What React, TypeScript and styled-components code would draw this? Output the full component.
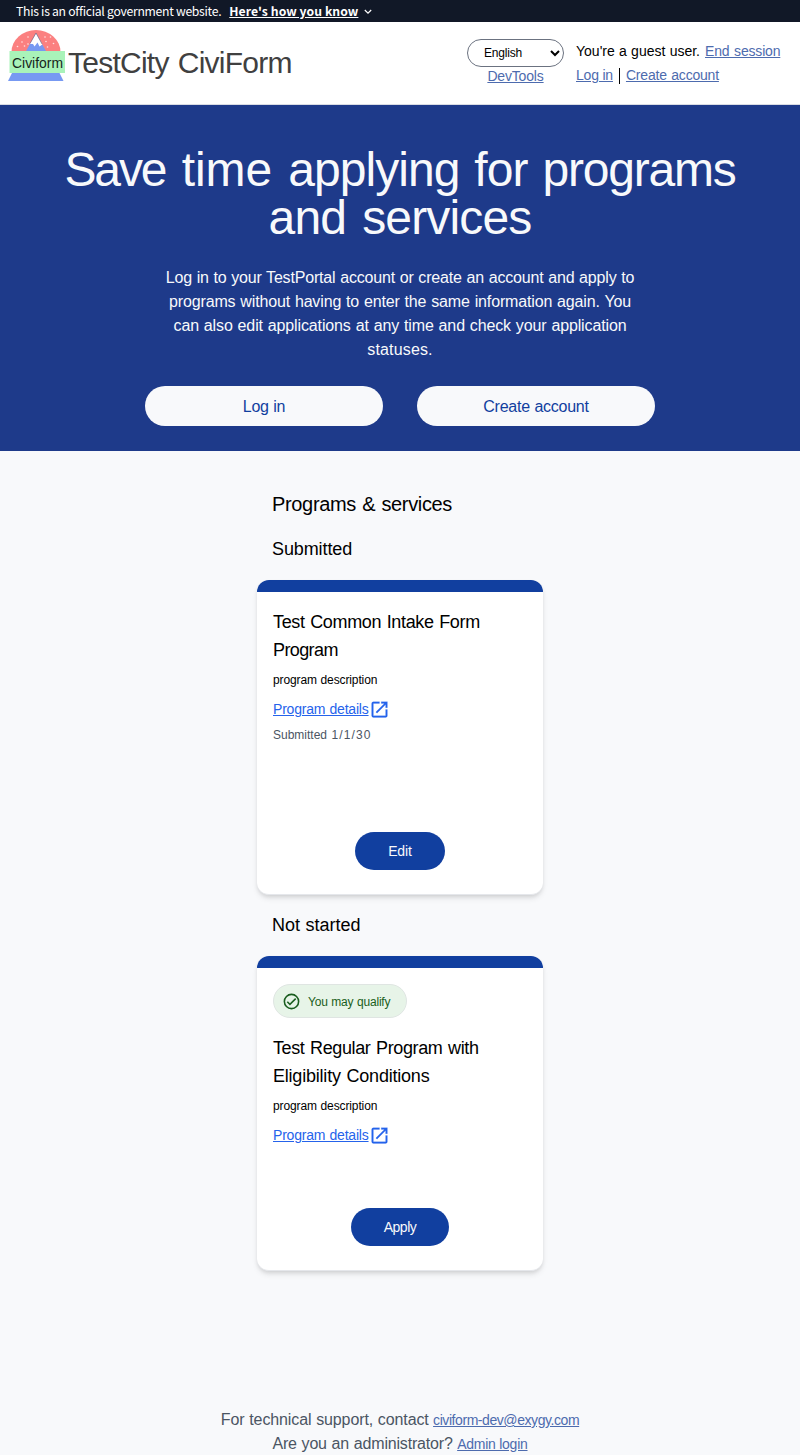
import React from "react";
import styled, { createGlobalStyle } from "styled-components";

const GlobalStyle = createGlobalStyle`
  * { box-sizing: border-box; }
  body { margin: 0; background: #f8f9fb; color: #000; font: 16px/24px "Liberation Sans", Arial, sans-serif; }
  h1, h2, h3, h4, p { margin: 0; font-weight: 400; white-space: nowrap; }
  a { color: #4d6bae; text-decoration: underline; }
`;

const Page = styled.div`
  width: 800px;
  height: 1455px;
  display: flex;
  flex-direction: column;
  overflow: hidden;
`;

const Banner = styled.div`
  height: 22px;
  padding: 1px 16px 0;
  display: flex;
  align-items: center;
  background: #111827;
  color: #fff;
  font: 12.2px/21px "Noto Sans CJK SC", sans-serif;
  white-space: nowrap;
`;

const BannerLink = styled.a`
  && { color: #fff; }
  margin: 0 6px 0 8px;
  font-weight: 700;
`;

const Header = styled.header`
  height: 83px;
  padding: 8px 20px 0 8px;
  display: flex;
  background: #fff;
  border-bottom: 1px solid #d9dce4;
`;

const Brand = styled.div`
  flex: 1;
  display: flex;
  align-items: flex-start;
`;

const BrandName = styled.h1`
  margin: 15px 0 0 3px;
  color: #404040;
  font-size: 30px;
  line-height: 36px;
`;

const LanguageColumn = styled.div`
  width: 97px;
  margin: 9px 12px 0 0;
  display: flex;
  flex-direction: column;
  align-items: center;
  font-size: 14px;
  line-height: 18px;
`;

const LanguagePicker = styled.div`
  width: 97px;
  height: 28px;
  padding: 0 3px 0 16px;
  display: flex;
  align-items: center;
  justify-content: space-between;
  border: 1px solid #6b7280;
  border-radius: 14px;
  font-size: 12px;
`;

const Account = styled.div`
  width: 204px;
  padding-top: 9px;
  font-size: 14px;
  white-space: nowrap;
`;

const AccountLine = styled.div`
  height: 24px;
  display: flex;
  align-items: center;
  gap: 5px;
`;

const Divider = styled.span`
  width: 1px;
  height: 16px;
  margin: 2px 1px 0;
  background: #000;
`;

const Hero = styled.section`
  height: 346px;
  padding-top: 41px;
  background: #1e3a8a;
  color: #f8f9fb;
  text-align: center;
`;

const HeroTitle = styled.h2`
  font-size: 48px;
  line-height: 48px;
`;

const HeroText = styled.p`
  margin-top: 24px;
`;

const HeroActions = styled.div`
  margin-top: 24px;
  display: flex;
  justify-content: center;
  gap: 34px;
`;

const HeroButton = styled.button`
  width: 238px;
  height: 40px;
  padding: 1px 0 0;
  border: 0;
  border-radius: 20px;
  background: #f8f9fb;
  color: #113f9f;
  font: inherit;
`;

const Programs = styled.main`
  width: 286px;
  margin: 39px auto 0;
`;

const SectionTitle = styled.h2`
  padding-left: 15px;
  margin-bottom: 1px;
  font-size: 20px;
  line-height: 28px;
`;

const GroupTitle = styled.h3`
  padding: 16px 0 17px 15px;
  font-size: 18px;
  line-height: 28px;
`;

const Card = styled.article`
  height: 315px;
  padding: 0 16px 24px;
  display: flex;
  flex-direction: column;
  overflow: hidden;
  background: #fff;
  border-bottom: 1px solid #e5e7eb;
  border-radius: 12px;
  box-shadow: 0 4px 6px -1px rgba(0, 0, 0, 0.1), 0 2px 4px -1px rgba(0, 0, 0, 0.1);
`;

const CardBar = styled.div`
  flex: none;
  height: 12px;
  margin: 0 -16px 16px;
  background: #113f9f;
`;

const Eligibility = styled.div`
  width: 134px;
  height: 34px;
  margin-bottom: 16px;
  padding: 1px 0 0 8px;
  display: flex;
  align-items: center;
  gap: 7px;
  border: 1px solid #dfe5e2;
  border-radius: 17px;
  background: #e7f4e8;
  color: #1b5e20;
  font-size: 12px;
  white-space: nowrap;
`;

const CardTitle = styled.h4`
  font-size: 18px;
  line-height: 28px;
`;

const Description = styled.p`
  margin-top: 8px;
  font-size: 12px;
  line-height: 16px;
`;

const Details = styled.a`
  && { color: #2563eb; }
  height: 20px;
  margin-top: 11px;
  display: flex;
  align-items: center;
  font-size: 14px;
  line-height: 20px;
`;

const SubmittedDate = styled.p`
  margin-top: 8px;
  color: #4b5563;
  font-size: 12px;
  line-height: 16px;
`;

const CardButton = styled.button<{ $width: number }>`
  width: ${(p) => p.$width}px;
  height: 38px;
  margin: auto auto 0;
  padding: 0 0 1px;
  border: 0;
  border-radius: 19px;
  background: #113f9f;
  color: #f8f9fb;
  font: 14px "Liberation Sans", Arial, sans-serif;
`;

const Footer = styled.footer`
  margin: auto 0 -1px;
  color: #4b5563;
  text-align: center;
  a { font-size: 14px; }
`;

/* Fine-tunes the set width of a run of text */
const Run = styled.span<{ $ls?: number; $ws?: number }>`
  letter-spacing: ${(p) => p.$ls ?? 0}px;
  word-spacing: ${(p) => p.$ws ?? 0}px;
`;

const LogoText = styled.text`
  font: 14px "Liberation Sans", Arial, sans-serif;
`;

const Logo = () => (
  <svg width="57" height="51" viewBox="0 0 57 51">
    <path d="M3.500 22A24.500 22 0 0 1 52.500 22Z" fill="#fb8080" />
    <path d="M17.500 22 28 3 38.500 22Z" fill="#7799f2" />
    <path d="M22 14 28 3.500 34.300 14.500 31.500 16.500 29.500 12.500 26.500 16.500 25 14Z" fill="#fff" />
    <path d="m22 13.500 6-10.500 6 11" fill="none" stroke="#665f68" strokeWidth=".5" />
    <g fill="#ffe1e1">
      {[[14, 12], [20, 7], [20, 14], [9.500, 16.500], [16.500, 16], [37, 7], [42.500, 7], [38, 11.500], [45.500, 13.500], [39.500, 17]].map(([x, y]) => (
        <circle key={`${x}-${y}`} cx={x} cy={y} r=".8" />
      ))}
    </g>
    <path d="M4 43H51.500L55.500 51H0Z" fill="#7799f2" />
    <path d="M1.500 21H57V43H1.500Z" fill="#a9f3b9" />
    <LogoText x="4" y="38" textLength="51" lengthAdjust="spacingAndGlyphs" fill="#17251b">
      Civiform
    </LogoText>
  </svg>
);

const OpenIcon = () => (
  <svg width="21" height="21" viewBox="0 0 24 24" fill="#2563eb" stroke="#2563eb" strokeWidth=".2">
    <path d="M19 19H5V5h7V3H5a2 2 0 0 0-2 2v14a2 2 0 0 0 2 2h14c1.100 0 2-.9 2-2v-7h-2v7ZM14 3v2h3.590l-9.830 9.830 1.410 1.410L19 6.410V10h2V3h-7Z" />
  </svg>
);

const CheckIcon = () => (
  <svg width="19" height="19" viewBox="0 0 24 24" fill="#1b5e20">
    <path d="M16.590 7.580 10 14.170l-2.590-2.580L6 13l4 4 8-8-1.410-1.420ZM12 2a10 10 0 1 0 0 20 10 10 0 0 0 0-20Zm0 18a8 8 0 1 1 0-16 8 8 0 0 1 0 16Z" />
  </svg>
);

export default function App() {
  return (
    <Page>
      <GlobalStyle />
      <Banner>
        <Run $ls={-0.28}>This is an official government website.</Run>
        <BannerLink><Run $ls={0.06}>Here's how you know</Run></BannerLink>
        <svg width="8" height="6" viewBox="0 0 8 6"><path d="m.8 1 3.200 3.200L7.200 1" fill="none" stroke="#fff" strokeWidth="1.200" /></svg>
      </Banner>
      <Header>
        <Brand>
          <Logo />
          <BrandName><Run $ls={-0.75} $ws={1.5}>TestCity CiviForm</Run></BrandName>
        </Brand>
        <LanguageColumn>
          <LanguagePicker>
            <Run $ls={-0.2}>English</Run>
            <svg width="10" height="7" viewBox="0 0 10 7"><path d="m1 1 4 4 4-4" fill="none" stroke="#000" strokeWidth="2" /></svg>
          </LanguagePicker>
          <a><Run $ls={-0.17}>DevTools</Run></a>
        </LanguageColumn>
        <Account>
          <AccountLine><Run $ws={0.4}>You're a guest user.</Run><a><Run $ls={-0.18} $ws={1}>End session</Run></a></AccountLine>
          <AccountLine><a><Run $ls={-0.2}>Log in</Run></a><Divider /><a><Run $ls={-0.2} $ws={0.8}>Create account</Run></a></AccountLine>
        </Account>
      </Header>
      <Hero>
        <HeroTitle>
          <Run $ls={-2.1} $ws={5}>Save </Run><Run $ls={-0.1} $ws={3}>time </Run><Run $ls={-0.95} $ws={2.5}>applying for </Run><Run $ls={-1.2}>programs</Run><br />
          <Run $ls={-0.85} $ws={3.5}>and services</Run>
        </HeroTitle>
        <HeroText>
          <Run $ls={-0.17} $ws={0.43}>Log in to your TestPortal account or create an account and apply to</Run><br />
          <Run $ls={-0.15} $ws={0.6}>programs without having to enter the same information again. You</Run><br />
          <Run $ls={-0.13} $ws={0.6}>can also edit applications at any time and check your application</Run><br />
          <Run $ls={0.15}>statuses.</Run>
        </HeroText>
        <HeroActions>
          <HeroButton><Run $ls={-0.3} $ws={0.5}>Log in</Run></HeroButton>
          <HeroButton><Run $ls={-0.26} $ws={0.5}>Create account</Run></HeroButton>
        </HeroActions>
      </Hero>
      <Programs>
        <SectionTitle><Run $ls={-0.34} $ws={1}>Programs &amp; services</Run></SectionTitle>
        <GroupTitle><Run $ls={-0.1}>Submitted</Run></GroupTitle>
        <Card>
          <CardBar />
          <CardTitle><Run $ls={-0.36} $ws={1}>Test Common Intake Form</Run><br /><Run $ls={-0.6}>Program</Run></CardTitle>
          <Description><Run $ls={-0.12} $ws={0.5}>program description</Run></Description>
          <Details><Run $ls={-0.2} $ws={0.5}>Program details</Run><OpenIcon /></Details>
          <SubmittedDate><Run $ws={1}>Submitted </Run><Run $ls={1.15}>1/1/30</Run></SubmittedDate>
          <CardButton $width={90}><Run $ls={-0.1}>Edit</Run></CardButton>
        </Card>
        <GroupTitle><Run $ws={0.5}>Not started</Run></GroupTitle>
        <Card>
          <CardBar />
          <Eligibility><CheckIcon /><Run $ls={-0.2} $ws={0.5}>You may qualify</Run></Eligibility>
          <CardTitle><Run $ls={-0.38} $ws={1}>Test Regular Program with</Run><br /><Run $ls={-0.21} $ws={1}>Eligibility Conditions</Run></CardTitle>
          <Description><Run $ls={-0.12} $ws={0.5}>program description</Run></Description>
          <Details><Run $ls={-0.2} $ws={0.5}>Program details</Run><OpenIcon /></Details>
          <CardButton $width={98}><Run $ls={-0.5}>Apply</Run></CardButton>
        </Card>
      </Programs>
      <Footer>
        <p><Run $ls={-0.12} $ws={0.5}>For technical support, contact</Run> <a><Run $ls={-0.43}>civiform-dev@exygy.com</Run></a></p>
        <p><Run $ls={-0.18} $ws={0.5}>Are you an administrator?</Run> <a><Run $ls={-0.25}>Admin login</Run></a></p>
      </Footer>
    </Page>
  );
}
